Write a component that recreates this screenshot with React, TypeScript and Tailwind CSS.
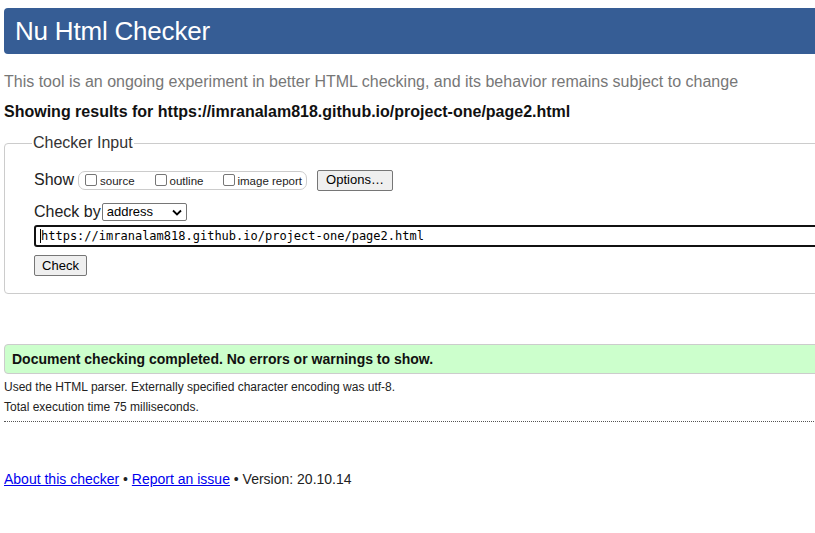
import React from "react";

export default function App() {
  return (
    <div className="w-[815px] h-[533px] overflow-hidden bg-white" style={{ fontFamily: '"Liberation Sans", Arial, sans-serif' }}>
      <div className="w-[1100px] pl-[4px] pt-[8px]">
        <div className="h-[46px] bg-[#365d95] rounded-l-[4px] flex items-center pl-[11px]">
          <span className="text-white text-[26px] leading-none tracking-[-0.2px]">Nu Html Checker</span>
        </div>
        <p className="mt-[19px] text-[16px] leading-[18px] text-[#777]">
          This tool is an ongoing experiment in better HTML checking, and its behavior remains subject to change
        </p>
        <p className="mt-[12px] text-[16px] leading-[18px] font-bold text-[#111]">
          Showing results for https://imranalam818.github.io/project-one/page2.html
        </p>
        <div className="relative mt-[22px] h-[151px] border border-[#ccc] rounded-[4px]">
          <span className="absolute left-[27px] top-[-10px] bg-white px-[1px] text-[16px] leading-[18px] text-[#333]">
            Checker Input
          </span>
          <div className="pl-[29px] pt-[25px]">
            <div className="flex items-center h-[22px]">
              <span className="text-[16px] text-[#222] mr-[4px]">Show</span>
              <div className="flex items-center h-[19px] border border-[#ccc] rounded-[7px] pl-[6px] pr-[4px] text-[11.5px] text-[#222]">
                <span className="w-[12px] h-[12px] border border-[#767676] rounded-[2px] bg-white mr-[3px]" />
                <span className="mt-[3px]">source</span>
                <span className="w-[12px] h-[12px] border border-[#767676] rounded-[2px] bg-white ml-[20px] mr-[3px]" />
                <span className="mt-[3px]">outline</span>
                <span className="w-[12px] h-[12px] border border-[#767676] rounded-[2px] bg-white ml-[20px] mr-[2px]" />
                <span className="mt-[3px]">image report</span>
              </div>
              <div className="ml-[10px] h-[21px] w-[76px] flex items-center justify-center border border-[#767676] rounded-[2px] bg-[#efefef] text-[13px] text-black">
                Options…
              </div>
            </div>
            <div className="flex items-center mt-[12px] h-[18px]">
              <span className="text-[16px] text-[#222] mr-[1px]">Check by</span>
              <div className="h-[18px] w-[85px] border border-[#767676] rounded-[2px] flex items-center pl-[4px] pr-[4px] justify-between text-[13px] text-black">
                <span>address</span>
                <svg width="10" height="7" viewBox="0 0 10 7"><path d="M1 1.5 L5 5.5 L9 1.5" stroke="black" strokeWidth="1.8" fill="none" /></svg>
              </div>
            </div>
            <div className="mt-[4px] h-[22px] border-2 border-[#111] rounded-l-[3px] flex items-center pl-[4px]">
              <span className="w-[1px] h-[14px] bg-black" />
              <span className="text-[12px] text-black" style={{ fontFamily: '"DejaVu Sans Mono", "Liberation Mono", monospace' }}>
                https://imranalam818.github.io/project-one/page2.html
              </span>
            </div>
            <div className="mt-[8px] h-[21px] w-[53px] flex items-center justify-center border border-[#767676] rounded-[2px] bg-[#efefef] text-[13px] text-black">
              Check
            </div>
          </div>
        </div>
        <div className="mt-[50px] h-[30px] bg-[#ccffcc] border border-[#ccc] rounded-l-[4px] flex items-center pl-[7px]">
          <span className="font-bold text-[14px] text-[#111]">Document checking completed. No errors or warnings to show.</span>
        </div>
        <p className="mt-[6px] text-[12px] leading-[14px] text-[#222]">
          Used the HTML parser. Externally specified character encoding was utf-8.
        </p>
        <p className="mt-[6px] text-[12px] leading-[14px] text-[#222]">Total execution time 75 milliseconds.</p>
        <div className="mt-[7px] border-t border-dotted border-[#555]" />
        <p className="mt-[49px] text-[14px] leading-[16px] text-[#222]">
          <a className="text-[#0000ee] underline">About this checker</a>
          {" • "}
          <a className="text-[#0000ee] underline">Report an issue</a>
          {" • Version: 20.10.14"}
        </p>
      </div>
    </div>
  );
}
